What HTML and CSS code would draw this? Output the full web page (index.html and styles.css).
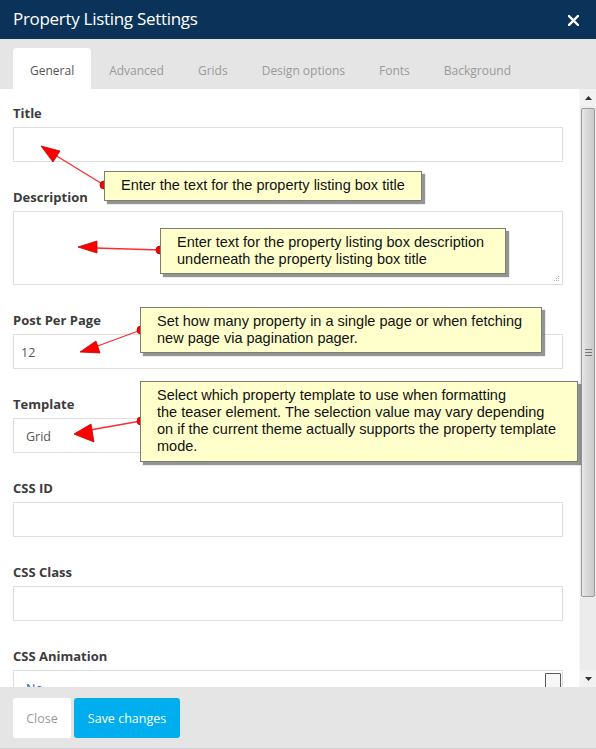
FILE: index.html
```html
<!DOCTYPE html>
<html>
<head>
<meta charset="utf-8">
<link rel="stylesheet" href="styles.css">
</head>
<body>
<div class="modal">
  <header class="modal-head">
    <h1 class="modal-title">Property Listing Settings</h1>
    <svg class="close-x" width="11" height="11" viewBox="0 0 11 11"><path d="M1 1 L10 10 M10 1 L1 10" stroke="#fff" stroke-width="2.4" stroke-linecap="square"/></svg>
  </header>
  <nav class="tabs">
    <span class="tab active">General</span>
    <span class="tab">Advanced</span>
    <span class="tab">Grids</span>
    <span class="tab">Design options</span>
    <span class="tab">Fonts</span>
    <span class="tab">Background</span>
  </nav>
  <div class="modal-body">
    <div class="form">
      <div class="field">
        <label class="label">Title</label>
        <div class="input"></div>
      </div>
      <div class="field">
        <label class="label">Description</label>
        <div class="input textarea">
          <svg class="grip" width="6" height="6" viewBox="0 0 6 6"><g fill="#b5b5b5"><rect x="4" y="0" width="1" height="1"/><rect x="2" y="2" width="1" height="1"/><rect x="4" y="2" width="1" height="1"/><rect x="0" y="4" width="1" height="1"/><rect x="2" y="4" width="1" height="1"/><rect x="4" y="4" width="1" height="1"/></g></svg>
        </div>
      </div>
      <div class="field">
        <label class="label">Post Per Page</label>
        <div class="input value-num">12</div>
      </div>
      <div class="field">
        <label class="label">Template</label>
        <div class="input value-sel">Grid</div>
      </div>
      <div class="field">
        <label class="label">CSS ID</label>
        <div class="input"></div>
      </div>
      <div class="field">
        <label class="label">CSS Class</label>
        <div class="input"></div>
      </div>
      <div class="field">
        <label class="label">CSS Animation</label>
        <div class="input listbox">
          <span class="list-opt">No</span>
          <span class="list-btn"></span>
        </div>
      </div>
    </div>
    <div class="scrollbar">
      <div class="sb-btn"><svg width="7" height="4" viewBox="0 0 7 4"><path d="M3.5 0 L7 4 L0 4 Z" fill="#333"/></svg></div>
      <div class="sb-thumb">
        <svg width="7" height="7" viewBox="0 0 7 7"><g fill="#777"><rect x="0" y="0" width="7" height="1"/><rect x="0" y="3" width="7" height="1"/><rect x="0" y="6" width="7" height="1"/></g></svg>
      </div>
      <div class="sb-track"></div>
      <div class="sb-btn"><svg width="7" height="4" viewBox="0 0 7 4"><path d="M0 0 L7 0 L3.5 4 Z" fill="#333"/></svg></div>
    </div>
  </div>
  <footer class="modal-foot">
    <button class="btn btn-close">Close</button>
    <button class="btn btn-save">Save changes</button>
  </footer>

  <svg class="arrows" width="596" height="749" viewBox="0 0 596 749">
    <g stroke="#ff2a2a" stroke-width="1.3" fill="none">
      <line x1="104" y1="185" x2="55" y2="155"/>
      <line x1="160" y1="250" x2="95" y2="248"/>
      <line x1="141" y1="330" x2="95" y2="347"/>
      <line x1="141" y1="421" x2="90" y2="430"/>
    </g>
    <g fill="#ff0000" stroke="#c00000" stroke-width="0.8" stroke-linejoin="round">
      <polygon points="41,146 60,151 53,162"/>
      <polygon points="78,247 97,241 97,253"/>
      <polygon points="80,352 96,341 100,353"/>
      <polygon points="74,434 91,424 94,442"/>
      <circle cx="104" cy="185" r="4"/>
      <circle cx="160" cy="250" r="4"/>
      <circle cx="141" cy="330" r="4"/>
      <circle cx="141" cy="421" r="4"/>
    </g>
  </svg>

  <div class="callout c1">Enter the text for the property listing box title</div>
  <div class="callout c2">Enter text for the property listing box description<br>underneath the property listing box title</div>
  <div class="callout c3">Set how many property in a single page or when fetching<br>new page via pagination pager.</div>
  <div class="callout c4">Select which property template to use when formatting<br>the teaser element. The selection value may vary depending<br>on if the current theme actually supports the property template<br>mode.</div>
</div>
</body>
</html>
```

FILE: styles.css
```css
* { box-sizing: border-box; }
html, body { margin: 0; padding: 0; }
body {
  width: 596px;
  height: 749px;
  overflow: hidden;
  font-family: "Open Sans", "DejaVu Sans", sans-serif;
  background: #fff;
}
.modal {
  position: relative;
  width: 596px;
  height: 749px;
  display: flex;
  flex-direction: column;
}
.modal-head {
  height: 39px;
  background: #0b3359;
  display: flex;
  align-items: center;
  justify-content: space-between;
  padding: 0 17px 0 13px;
}
.modal-title {
  margin: 0;
  font-size: 17px;
  font-weight: 400;
  color: #fff;
  letter-spacing: -0.3px;
  line-height: 20px;
  padding-bottom: 1px;
}
.close-x { display: block; margin-top: 2px; }
.tabs {
  height: 50px;
  background: #e5e5e5;
  display: flex;
  align-items: flex-end;
  padding-left: 13px;
}
.tab {
  height: 41px;
  padding: 3px 16px 0;
  margin-right: 2px;
  display: flex;
  align-items: center;
  font-size: 12px;
  color: #9a9a9a;
  border-radius: 4px 4px 0 0;
}
.tab.active {
  background: #fff;
  color: #555;
  padding: 3px 17px 0;
}
.modal-body {
  height: 598px;
  display: flex;
}
.form {
  width: 579px;
  padding: 15px 16px 0 13px;
  overflow: hidden;
}
.field { margin-bottom: 26px; }
.label {
  display: block;
  font-size: 13px;
  font-weight: 700;
  line-height: 18px;
  color: #3c3c3c;
  margin-bottom: 5px;
}
.input {
  position: relative;
  height: 35px;
  border: 1px solid #dedede;
  background: #fff;
  font-size: 12.5px;
  color: #555;
  display: flex;
  align-items: center;
}
.textarea { height: 74px; }
.grip { position: absolute; right: 2px; bottom: 2px; }
.value-num { padding-left: 7px; padding-top: 2px; }
.value-sel { padding-left: 12px; padding-top: 2px; }
.listbox {
  align-items: flex-start;
  justify-content: space-between;
  padding-left: 12px;
}
.list-opt {
  color: #2f5f9e;
  margin-top: 9px;
  line-height: 18px;
}
.list-btn {
  width: 16px;
  height: 40px;
  margin: 2px 1px 0 0;
  border: 1px solid #5a5a5a;
  border-radius: 1px;
  background: #f7f7f7;
}
.scrollbar {
  width: 17px;
  display: flex;
  flex-direction: column;
  background: #ececec;
  border-left: 1px solid #f8f8f8;
}
.sb-btn {
  height: 17px;
  display: flex;
  align-items: center;
  justify-content: center;
  background: #f2f2f2;
}
.sb-thumb {
  height: 489px;
  margin: 2px 1px 0 1px;
  border: 1px solid #9a9a9a;
  border-radius: 2px;
  background: linear-gradient(to right, #e8e8e8, #dadada 40%, #cbcbcb);
  display: flex;
  align-items: center;
  justify-content: center;
}
.sb-track { flex: 1; }
.modal-foot {
  height: 62px;
  background: #e5e5e5;
  border-bottom: 1px solid #cfcfcf;
  display: flex;
  align-items: flex-start;
  padding: 11px 13px 0;
  gap: 3px;
}
.btn {
  height: 40px;
  border: none;
  border-radius: 3px;
  font-family: "Open Sans", "DejaVu Sans", sans-serif;
  font-size: 12.5px;
  padding: 0;
  cursor: pointer;
}
.btn-close { width: 58px; background: #fff; color: #999; }
.btn-save { width: 106px; background: #00aeef; color: #fff; }
.arrows {
  position: absolute;
  left: 0;
  top: 0;
  pointer-events: none;
}
.callout {
  position: absolute;
  background: #ffffcc;
  border: 1px solid #7d7d72;
  box-shadow: 3px 3px 1px rgba(60, 60, 60, 0.55);
  font-family: "Liberation Sans", Arial, sans-serif;
  font-size: 14.5px;
  line-height: 17px;
  color: #111;
  white-space: nowrap;
  padding: 5px 10px 6px 16px;
}
.c1 { left: 104px; top: 171px; width: 318px; height: 30px; }
.c2 { left: 160px; top: 228px; width: 346px; height: 46px; }
.c3 { left: 140px; top: 307px; width: 402px; height: 46px; }
.c4 { left: 140px; top: 381px; width: 438px; height: 81px; }
```
